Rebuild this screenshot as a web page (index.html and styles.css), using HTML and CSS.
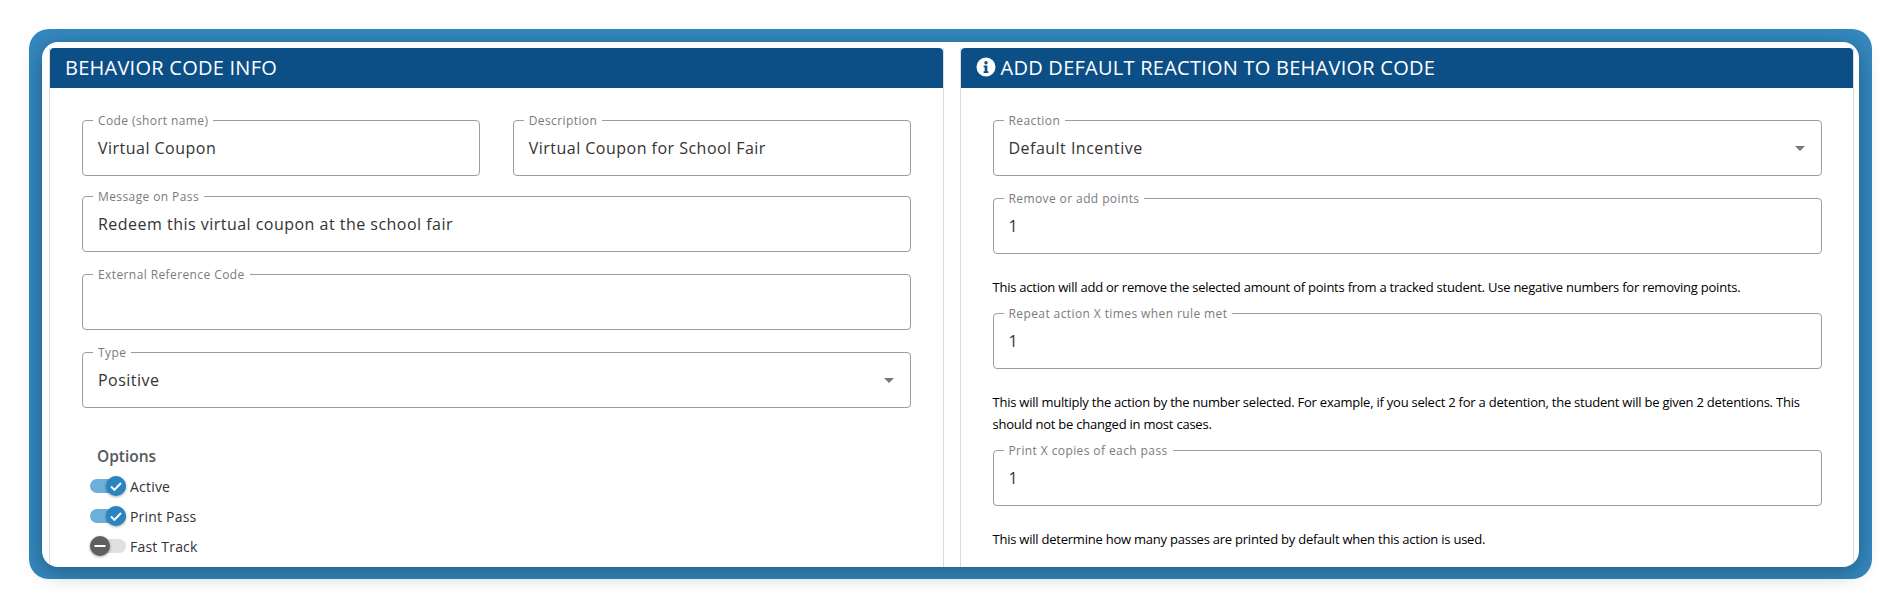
FILE: index.html
```html
<html lang="en">
<head>
    <title>Behavior code</title>
    <meta charset="UTF-8">
    <meta name="viewport" content="width=device-width, initial-scale=1.0">
    <link rel="stylesheet" href="styles.css">
</head>
<body>
    <div class="frame">
        <div class="sheet">
            <section class="card">
                <h2 class="card-title">BEHAVIOR CODE INFO</h2>
                <div class="card-body">
                    <div class="field-row">
                        <div class="field"><label>Code (short name)</label><span>Virtual Coupon</span></div>
                        <div class="field"><label>Description</label><span>Virtual Coupon for School Fair</span></div>
                    </div>
                    <div class="field"><label>Message on Pass</label><span>Redeem this virtual coupon at the school fair</span></div>
                    <div class="field"><label>External Reference Code</label><span></span></div>
                    <div class="field"><label>Type</label><span>Positive</span><i class="arrow"></i></div>
                    <h4 class="options-title">Options</h4>
                    <div class="toggle-row">
                        <div class="toggle on">
                            <span class="thumb"><svg viewBox="0 0 20 20"><path d="M5 10.5l3.4 3.4L15 7" /></svg></span>
                        </div>
                        <span>Active</span>
                    </div>
                    <div class="toggle-row">
                        <div class="toggle on">
                            <span class="thumb"><svg viewBox="0 0 20 20"><path d="M5 10.5l3.4 3.4L15 7" /></svg></span>
                        </div>
                        <span>Print Pass</span>
                    </div>
                    <div class="toggle-row">
                        <div class="toggle">
                            <span class="thumb"><svg viewBox="0 0 20 20"><path d="M4.5 10h11" /></svg></span>
                        </div>
                        <span>Fast Track</span>
                    </div>
                </div>
            </section>
            <section class="card">
                <h2 class="card-title">
                    <svg class="info-icon" viewBox="0 0 20 20"><path fill-rule="evenodd" d="M10 .5a9.5 9.5 0 1 0 0 19 9.5 9.5 0 0 0 0-19zM10 4.1a1.7 1.7 0 1 1 0 3.4 1.7 1.7 0 0 1 0-3.4zM7.7 8.6h3.6v5.6h1.1v1.7H7.6v-1.7h1.1v-3.9h-1z" /></svg>
                    ADD DEFAULT REACTION TO BEHAVIOR CODE
                </h2>
                <div class="card-body wide">
                    <div class="field"><label>Reaction</label><span>Default Incentive</span><i class="arrow"></i></div>
                    <div class="field"><label>Remove or add points</label><span>1</span></div>
                    <p class="hint">This action will add or remove the selected amount of points from a tracked student. Use negative numbers for removing points.</p>
                    <div class="field"><label>Repeat action X times when rule met</label><span>1</span></div>
                    <p class="hint">This will multiply the action by the number selected. For example, if you select 2 for a detention, the student will be given 2 detentions. This should not be changed in most cases.</p>
                    <div class="field"><label>Print X copies of each pass</label><span>1</span></div>
                    <p class="hint">This will determine how many passes are printed by default when this action is used.</p>
                </div>
            </section>
        </div>
    </div>
</body>
</html>
```

FILE: styles.css
```css
body {
    margin: 0;
    padding: 29px;
    background-color: #fff;
    font-family: "Open Sans", sans-serif;
}
.frame {
    height: 550px;
    box-sizing: border-box;
    padding: 13px 13px 12px 13px;
    background-color: #3488c0;
    border-radius: 20px;
}
.sheet {
    display: flex;
    gap: 16px;
    height: 100%;
    box-sizing: border-box;
    padding: 6px 5px 0 7px;
    background-color: #fff;
    border-radius: 16px;
    overflow: hidden;
    box-shadow: 0 5px 22px rgba(0, 0, 0, 0.32);
}
.card {
    flex: 1;
    min-width: 0;
    border-left: 1px solid #dcdcdc;
    border-right: 1px solid #dcdcdc;
    overflow: hidden;
}
.card-title {
    display: flex;
    align-items: center;
    gap: 5px;
    height: 40px;
    box-sizing: border-box;
    margin: 0;
    padding: 0 0 2px 15px;
    background-color: #0c4f86;
    color: #fff;
    font-size: 20px;
    font-weight: 400;
    letter-spacing: 0.25px;
    border-radius: 4px 4px 0 0;
}
.info-icon {
    width: 20px;
    height: 20px;
    fill: #fff;
}
.card-body {
    padding: 32px 32px 0 32px;
}
.card-body.wide {
    padding-right: 31px;
}
.field-row {
    display: flex;
    gap: 33px;
}
.field-row .field {
    flex: 1;
    margin-bottom: 20px;
}
.field {
    position: relative;
    display: flex;
    align-items: center;
    justify-content: space-between;
    height: 56px;
    box-sizing: border-box;
    margin-bottom: 22px;
    padding: 0 15px;
    border: 1px solid #9c9c9c;
    border-radius: 4px;
    font-size: 16px;
    letter-spacing: 0.48px;
    color: #333;
}
.field label {
    position: absolute;
    top: -7px;
    left: 10px;
    padding: 0 5px;
    background-color: #fff;
    font-size: 12px;
    line-height: 14px;
    letter-spacing: 0.4px;
    color: #7b7b7b;
}
.arrow {
    width: 0;
    height: 0;
    margin-right: 1px;
    border-left: 5px solid transparent;
    border-right: 5px solid transparent;
    border-top: 5px solid #777;
}
.options-title {
    margin: 38px 0 10px 15px;
    font-size: 15.5px;
    line-height: 20px;
    font-weight: 600;
    color: #55585c;
}
.toggle-row {
    display: flex;
    align-items: center;
    gap: 4px;
    height: 20px;
    margin: 0 0 10px 8px;
    font-size: 14px;
    letter-spacing: 0.2px;
    color: #333;
}
.toggle {
    display: flex;
    align-items: center;
    width: 36px;
    height: 14px;
    background-color: #e0e0e0;
    border-radius: 7px;
}
.toggle.on {
    justify-content: flex-end;
    background-color: #6cafd8;
}
.thumb {
    display: block;
    width: 20px;
    height: 20px;
    border-radius: 50%;
    background-color: #5f5f5f;
    box-shadow: 0 1px 3px rgba(0, 0, 0, 0.35);
}
.toggle.on .thumb {
    background-color: #2a84c0;
}
.thumb svg {
    display: block;
    fill: none;
    stroke: #fff;
    stroke-width: 2;
}
.hint {
    margin: 1px 0 15px 0;
    font-size: 13px;
    line-height: 22px;
    letter-spacing: -0.23px;
    color: #000;
}
```
